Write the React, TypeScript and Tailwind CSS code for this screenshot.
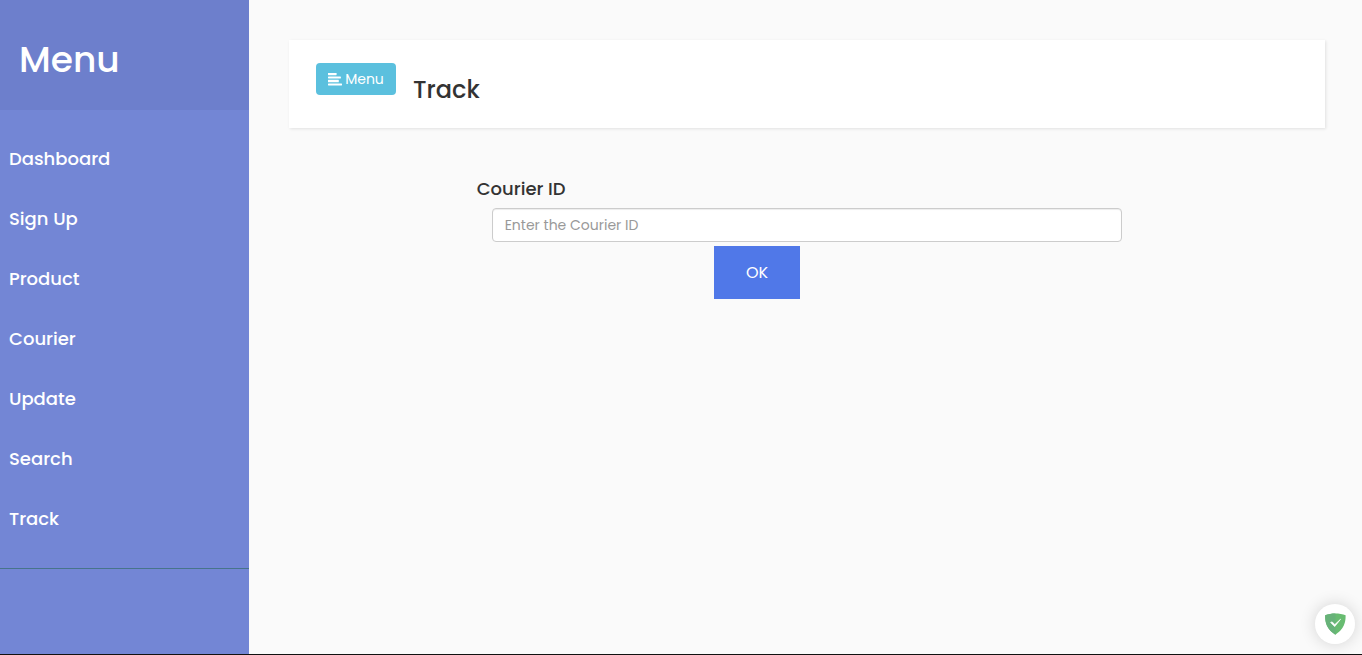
import React from 'react';

const links = ['Dashboard', 'Sign Up', 'Product', 'Courier', 'Update', 'Search', 'Track'];

function Sidebar() {
  return (
    <aside className="w-[249px] shrink-0 bg-[#7386d5] text-white">
      <div className="flex h-[110px] items-center bg-[#6d7fcc] px-[19px] pt-[10px]">
        <h3 className="text-[36px] leading-10 font-medium">Menu</h3>
      </div>
      <nav className="border-b border-[#47748b] py-[19px]">
        <ul>
          {links.map((label) => (
            <li key={label}>
              <a href="#" className="flex h-[60px] items-center px-[9px] text-[18px] leading-6 font-medium">
                {label}
              </a>
            </li>
          ))}
        </ul>
      </nav>
    </aside>
  );
}

function AlignLeftIcon() {
  return (
    <svg viewBox="0 0 14 13" className="h-[13px] w-[14px]" fill="currentColor" aria-hidden="true">
      <rect x="0" y="-0.5" width="8.6" height="2.7" rx="0.4" />
      <rect x="0" y="3.5" width="12.9" height="2" rx="0.4" />
      <rect x="0" y="6.7" width="10.8" height="2.6" rx="0.4" />
      <rect x="0" y="10.5" width="14" height="2" rx="0.4" />
    </svg>
  );
}

function Header() {
  return (
    <header className="flex h-[88px] items-start bg-white px-[27px] pt-[23px] shadow-[1px_1px_3px_rgba(0,0,0,0.1)]">
      <button
        type="button"
        className="flex h-8 w-20 items-center justify-center gap-[3px] rounded bg-[#5bc0de] text-[14px] leading-5 text-white"
      >
        <AlignLeftIcon />
        Menu
      </button>
      <h2 className="mt-[13px] ml-[17px] text-[24px] leading-7 font-medium text-[#333333]">Track</h2>
    </header>
  );
}

function TrackForm() {
  return (
    <form className="mx-auto mt-[49px] w-2/3 px-[15px]" onSubmit={(e) => e.preventDefault()}>
      <label htmlFor="courier-id" className="block text-[18px] leading-6 font-medium text-[#333333]">
        Courier ID
      </label>
      <div className="mt-[7px] px-[15px]">
        <input
          id="courier-id"
          type="text"
          placeholder="Enter the Courier ID"
          className="block h-[34px] w-full rounded border border-[#cccccc] bg-white px-3 text-[14px] leading-5 text-[#555555] shadow-[inset_0_1px_1px_rgba(0,0,0,0.075)] placeholder:text-[#999999]"
        />
      </div>
      <div className="mt-1 flex justify-center pr-[100px]">
        <button type="submit" className="h-[53px] w-[86px] bg-[#5078e8] text-[16px] leading-5 text-white">
          OK
        </button>
      </div>
    </form>
  );
}

function ShieldBadge() {
  return (
    <button
      type="button"
      aria-label="Protection status"
      className="fixed right-[7px] bottom-[11px] flex size-10 items-center justify-center rounded-full bg-white shadow-[0_0_16px_rgba(0,0,0,0.16)]"
    >
      <svg viewBox="0 0 22 22" className="size-[22px]" aria-hidden="true">
        <path d="M11.4 0.4C8 0.4 4 0.9 1.2 2.3C1.2 6 0.8 15 11.4 21.7C22 15 21.6 6 21.6 2.3C18.8 0.9 14.8 0.4 11.4 0.4Z" fill="#68bc71" />
        <path d="M11.4 0.4C8 0.4 4 0.9 1.2 2.3C1.2 6 0.8 15 11.4 21.7Z" fill="#67b279" />
        <path d="M6.6 9.4L10.7 13.6L16.6 6.2L10.8 11.6L8.2 8.9Z" fill="#ffffff" stroke="#ffffff" strokeWidth="0.7" />
      </svg>
    </button>
  );
}

export default function App() {
  return (
    <div className="flex min-h-screen border-b border-[#111111] bg-[#fafafa] font-['Poppins','Inter',sans-serif]">
      <Sidebar />
      <main className="min-w-0 flex-1 pt-10 pr-[37px] pl-10">
        <Header />
        <TrackForm />
      </main>
      <ShieldBadge />
    </div>
  );
}
